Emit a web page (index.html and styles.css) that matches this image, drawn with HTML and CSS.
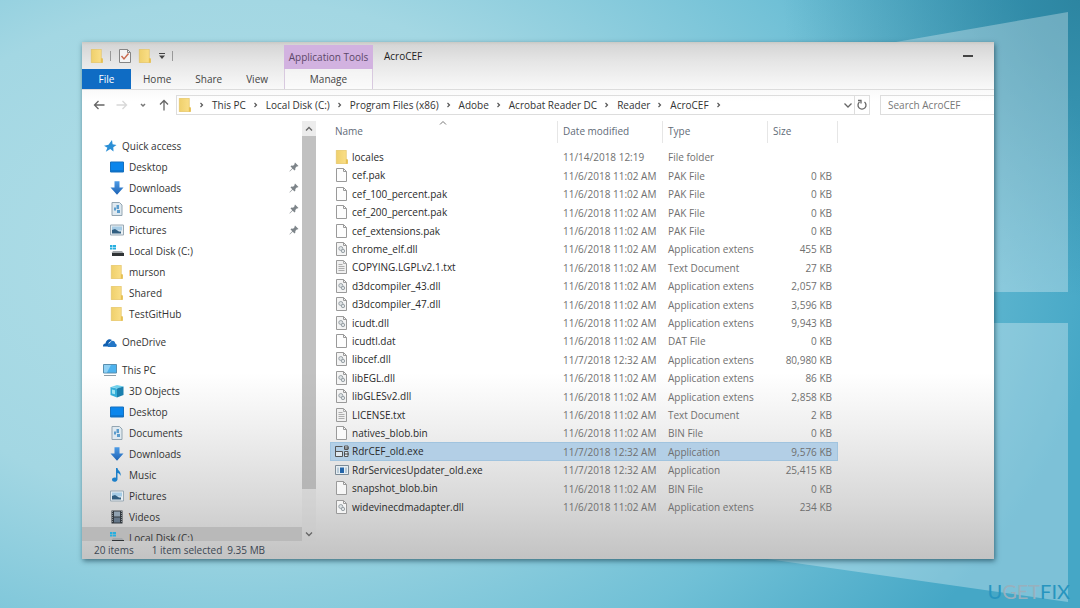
FILE: index.html
```html
<!DOCTYPE html>
<html lang="en">
<head>
<meta charset="utf-8">
<title>AcroCEF</title>
<link rel="stylesheet" href="styles.css">
</head>
<body>
<svg class="defs" aria-hidden="true">
  <defs>
    <linearGradient id="fold" x1="0" x2="1"><stop offset="0" stop-color="#efd06c"/><stop offset="1" stop-color="#fbe08a"/></linearGradient>
    <linearGradient id="down" x1="0" x2="0" y1="0" y2="1"><stop offset="0" stop-color="#4d9be6"/><stop offset="1" stop-color="#1d62b4"/></linearGradient>
  </defs>
  <symbol id="folder" viewBox="0 0 14 14"><path fill="url(#fold)" stroke="#dfbd5c" stroke-width=".6" d="M1.300.3h10v9l1 .8v3.600h-11z"/><path fill="#e6c053" d="M10.800 9.300h2v4.400h-2z"/></symbol>
  <symbol id="file" viewBox="0 0 14 14"><path fill="#fdfdfd" fill-opacity=".8" stroke="#9a9a9a" d="M1.500.5h7l3 3v10h-10z"/><path fill="none" stroke="#9a9a9a" d="M8.500.5v3h3"/></symbol>
  <symbol id="dll" viewBox="0 0 14 14"><path fill="#f4f4f4" stroke="#9a9a9a" d="M1.500.5h7l3 3v10h-10z"/><path fill="none" stroke="#9a9a9a" d="M8.500.5v3h3"/><circle cx="5.800" cy="6.500" r="2" fill="#dfe3e5" stroke="#9aa2a7"/><circle cx="8" cy="9" r="1.700" fill="#dfe3e5" stroke="#9aa2a7"/></symbol>
  <symbol id="txt" viewBox="0 0 14 14"><path fill="#f0f0f0" stroke="#9a9a9a" d="M1.500.5h7l3 3v10h-10z"/><path fill="none" stroke="#adadad" d="M8.500.5v3h3M3.500 4.500h4M3.500 6.500h6M3.500 8.500h6M3.500 10.500h6"/></symbol>
  <symbol id="cef" viewBox="0 0 14 14"><path fill="#dfe9f0" stroke="#555" d="M.5 2.500h7M.5 2.500v10M.5 7.500h7v5h-7M9.500 2h3.500v3.500h-3.500zM9.500 7.500h3.500v5h-3.500z"/><path stroke="#444" d="M9 4h5M9 10h5"/></symbol>
  <symbol id="app" viewBox="0 0 14 14"><path fill="#e6eef3" stroke="#7c8b97" d="M.5 2.500h13v9H.5z"/><path fill="#2465a9" d="M5 4.500h4v5.500H5z"/><path fill="#b9cbd8" d="M2 4.500h2v5.500H2zM10 4.500h2v5.500h-2z"/></symbol>
  <symbol id="star" viewBox="0 0 14 14"><path fill="#2b8fd6" d="M9 1 9.600 5.200 13.500 6 10.300 8.200 10.500 12.500 7.300 10 2.800 12.700 4.400 8.700 1 6.700 5.500 5.700z"/></symbol>
  <symbol id="desktop" viewBox="0 0 14 14"><path fill="#0b86ec" stroke="#1671bf" d="M.5 2h13v10H.5z"/><path fill="#0f66b4" d="M1 10.500h12v1H1z"/></symbol>
  <symbol id="downloads" viewBox="0 0 14 14"><path fill="url(#down)" d="M4.500.3h5v6.200h4L7 13.700.5 6.500h4z"/></symbol>
  <symbol id="documents" viewBox="0 0 14 14"><path fill="#dfe9f0" stroke="#93a5b1" d="M2 .5h7.500L12 3v10.500H2z"/><path fill="#5b9ccc" d="M6.500 3h2.500v4H6.500zM4 5.500h2v3H4zM7 8h3v3H7z"/></symbol>
  <symbol id="pictures" viewBox="0 0 14 14"><path fill="#e9eff3" stroke="#9aa9b4" d="M.5 2h13v10H.5z"/><path fill="#a6cce6" d="M2 3.500h10v4H2z"/><path fill="#315e80" d="m2 7 3-1 4 2.500h2v2H2z"/></symbol>
  <symbol id="disk" viewBox="0 0 14 14"><path fill="#27afe0" d="M0 1h2.500v2H0zM3 1h3v2H3zM0 3.500h2.500v2H0zM3 3.500h3v2H3z"/><path fill="#a4a8ab" d="M3 7h9l1.500 2h-12z"/><path fill="#303436" d="M2 9h12v3H2z"/></symbol>
  <symbol id="cloud" viewBox="0 0 14 14"><path fill="#0f5eb0" d="M0 11.500c0-3 2-3 2.500-3C3 5 6 3 9 5L5.500 8v3.500z"/><path fill="#2376c6" d="M5 12c-1-3 1-4 2-4 1-3 5-3 5.200.5 2 .5 2 3.500 0 3.500z"/></symbol>
  <symbol id="pc" viewBox="0 0 14 14"><path fill="#4db2ee" stroke="#5a8fae" d="M.5 1.500h13v8.500H.5z"/><path fill="#91d1f4" d="M1 2h7L4 9.500H1z"/><path fill="#8e9ca5" d="M1 12h12v1H1z"/></symbol>
  <symbol id="cube" viewBox="0 0 14 14"><path fill="#6fd0ec" d="m1 3 6-2 6.500 1.500-5 2z"/><path fill="#34aed8" d="m.5 3 6.500 1.500v9L.5 11z"/><path fill="#1a7fae" d="m7 4.500 6.500-2V11L7 13.500z"/><path fill="#9ee4f3" d="m2 5.500 3 .8v4L2 9.500z"/></symbol>
  <symbol id="music" viewBox="0 0 14 14"><path fill="#1c7fc9" d="M6 0h1.500c.5 3 4 3.500 3 8-.5-2-1.500-2.600-3-3v6.500C7 14.500 2 14.500 2 11.800 2 9.500 4.500 9 6 9.700z"/></symbol>
  <symbol id="videos" viewBox="0 0 14 14"><path fill="#33393f" d="M1.500.5h11v13h-11z"/><path fill="#91a2b1" d="M4 1.500h6v5H4z"/><path fill="#657789" d="M4 7.500h6v5H4z"/><path stroke="#8d9499" stroke-dasharray="1 1" d="M2.500 1v12M11.500 1v12"/></symbol>
  <symbol id="pin" viewBox="0 0 10 10"><path fill="#7d8489" d="m6 .5 3.500 3.500-1 .5-.5-.3-1.700 1.700.1 1.700-.9.900L3.700 6.700.8 9.500.4 9.200l2.900-2.900L1.500 4.500l.9-.9 1.700.1L5.800 2l-.3-.6z"/></symbol>
  <symbol id="next" viewBox="0 0 6 8"><path fill="none" stroke="#555" stroke-width="1.200" d="m1.500 2 2 2-2 2"/></symbol>
</svg>

<svg class="wall" viewBox="0 0 1080 608" preserveAspectRatio="none" aria-hidden="true">
  <path d="M850 50 1068 12V292H850z"/>
  <path d="M850 323H1068V602L740 555V323z"/>
</svg>

<main class="window">
  <header class="ribbon">
    <div class="quick">
      <svg class="ico"><use href="#folder"/></svg>
      <span class="bar"></span>
      <button class="plain check" aria-label="Properties"><svg class="ico" viewBox="0 0 14 14"><path fill="#f4f4f4" stroke="#858585" d="M1.500.5h8l3 3v10h-11z"/><path fill="none" stroke="#858585" d="M9.500.5v3h3"/><path fill="none" stroke="#c8694e" stroke-width="1.400" d="m3.500 7 2.500 3 4.500-5.500"/></svg></button>
      <button class="plain" aria-label="New folder"><svg class="ico"><use href="#folder"/></svg></button>
      <button class="plain" aria-label="Customize"><svg class="tiny" viewBox="0 0 8 8"><path fill="#444" d="M1 1h6v1H1zM1 3.500h6L4 7z"/></svg></button>
      <span class="bar"></span>
    </div>
    <div class="context">Application Tools</div>
    <div class="title"><h1>AcroCEF</h1><button class="plain" aria-label="Minimize"><svg class="dash" viewBox="0 0 10 2"><path fill="#444" d="M0 0h10v2H0z"/></svg></button></div>
    <nav class="tabs">
      <button class="tab file">File</button><button class="tab">Home</button><button class="tab">Share</button><button class="tab">View</button>
    </nav>
    <button class="tab manage">Manage</button>
  </header>

  <div class="address">
    <div class="moves">
      <button class="plain" aria-label="Back"><svg class="arrow" viewBox="0 0 12 12"><path d="M11.500 6H1.500M5.500 2l-4 4 4 4"/></svg></button>
      <button class="plain faint" aria-label="Forward"><svg class="arrow" viewBox="0 0 12 12"><path d="M.5 6h10M6.500 2l4 4-4 4"/></svg></button>
      <button class="plain" aria-label="Recent"><svg class="tiny" viewBox="0 0 8 8"><path fill="none" stroke="#777" stroke-width="1.500" d="m2 3 2 2 2-2"/></svg></button>
      <button class="plain" aria-label="Up"><svg class="arrow" viewBox="0 0 12 12"><path d="M6 11.500v-10M2 5.500l4-4 4 4"/></svg></button>
    </div>
    <nav class="path">
      <svg class="ico"><use href="#folder"/></svg>
      <svg class="sep"><use href="#next"/></svg><a href="#">This PC</a>
      <svg class="sep"><use href="#next"/></svg><a href="#">Local Disk (C:)</a>
      <svg class="sep"><use href="#next"/></svg><a href="#">Program Files (x86)</a>
      <svg class="sep"><use href="#next"/></svg><a href="#">Adobe</a>
      <svg class="sep"><use href="#next"/></svg><a href="#">Acrobat Reader DC</a>
      <svg class="sep"><use href="#next"/></svg><a href="#">Reader</a>
      <svg class="sep"><use href="#next"/></svg><a href="#">AcroCEF</a>
      <svg class="sep"><use href="#next"/></svg>
      <button class="plain drop" aria-label="Previous locations"><svg class="arrow" viewBox="0 0 12 12"><path d="m2.500 4.500 3.500 3.500 3.500-3.500"/></svg></button>
      <button class="plain reload" aria-label="Refresh"><svg class="arrow" viewBox="0 0 12 12"><path d="M3.500 3A4 4 0 1 0 8.500 3M2 1.500h3v3"/></svg></button>
    </nav>
    <input class="search" type="search" aria-label="Search AcroCEF" placeholder="Search AcroCEF">
  </div>

  <div class="panes">
    <nav class="tree">
      <a class="top" href="#"><svg class="ico"><use href="#star"/></svg>Quick access</a>
      <a href="#"><svg class="ico"><use href="#desktop"/></svg>Desktop<svg class="pin"><use href="#pin"/></svg></a>
      <a href="#"><svg class="ico"><use href="#downloads"/></svg>Downloads<svg class="pin"><use href="#pin"/></svg></a>
      <a href="#"><svg class="ico"><use href="#documents"/></svg>Documents<svg class="pin"><use href="#pin"/></svg></a>
      <a href="#"><svg class="ico"><use href="#pictures"/></svg>Pictures<svg class="pin"><use href="#pin"/></svg></a>
      <a href="#"><svg class="ico"><use href="#disk"/></svg>Local Disk (C:)</a>
      <a href="#"><svg class="ico"><use href="#folder"/></svg>murson</a>
      <a href="#"><svg class="ico"><use href="#folder"/></svg>Shared</a>
      <a href="#"><svg class="ico"><use href="#folder"/></svg>TestGitHub</a>
      <a class="top group" href="#"><svg class="ico"><use href="#cloud"/></svg>OneDrive</a>
      <a class="top group" href="#"><svg class="ico"><use href="#pc"/></svg>This PC</a>
      <a href="#"><svg class="ico"><use href="#cube"/></svg>3D Objects</a>
      <a href="#"><svg class="ico"><use href="#desktop"/></svg>Desktop</a>
      <a href="#"><svg class="ico"><use href="#documents"/></svg>Documents</a>
      <a href="#"><svg class="ico"><use href="#downloads"/></svg>Downloads</a>
      <a href="#"><svg class="ico"><use href="#music"/></svg>Music</a>
      <a href="#"><svg class="ico"><use href="#pictures"/></svg>Pictures</a>
      <a href="#"><svg class="ico"><use href="#videos"/></svg>Videos</a>
      <a class="current" href="#"><svg class="ico"><use href="#disk"/></svg>Local Disk (C:)</a>
    </nav>
    <div class="scroll">
      <button class="plain" aria-label="Scroll up"><svg class="arrow" viewBox="0 0 12 12"><path d="m3 7.500 3-3 3 3"/></svg></button>
      <div class="thumb"></div>
      <button class="plain" aria-label="Scroll down"><svg class="arrow" viewBox="0 0 12 12"><path d="m3 4.500 3 3 3-3"/></svg></button>
    </div>
    <div class="list">
      <table>
        <thead><tr><th class="name">Name<svg class="sort" viewBox="0 0 8 4"><path fill="none" stroke="#777" d="m1 3.500 3-3 3 3"/></svg></th><th class="date">Date modified</th><th class="type">Type</th><th class="size">Size</th></tr></thead>
        <tbody>
          <tr><td><svg class="ico"><use href="#folder"/></svg>locales</td><td>11/14/2018 12:19</td><td>File folder</td><td></td></tr>
          <tr><td><svg class="ico"><use href="#file"/></svg>cef.pak</td><td>11/6/2018 11:02 AM</td><td>PAK File</td><td>0 KB</td></tr>
          <tr><td><svg class="ico"><use href="#file"/></svg>cef_100_percent.pak</td><td>11/6/2018 11:02 AM</td><td>PAK File</td><td>0 KB</td></tr>
          <tr><td><svg class="ico"><use href="#file"/></svg>cef_200_percent.pak</td><td>11/6/2018 11:02 AM</td><td>PAK File</td><td>0 KB</td></tr>
          <tr><td><svg class="ico"><use href="#file"/></svg>cef_extensions.pak</td><td>11/6/2018 11:02 AM</td><td>PAK File</td><td>0 KB</td></tr>
          <tr><td><svg class="ico"><use href="#dll"/></svg>chrome_elf.dll</td><td>11/6/2018 11:02 AM</td><td>Application extens</td><td>455 KB</td></tr>
          <tr><td><svg class="ico"><use href="#txt"/></svg>COPYING.LGPLv2.1.txt</td><td>11/6/2018 11:02 AM</td><td>Text Document</td><td>27 KB</td></tr>
          <tr><td><svg class="ico"><use href="#dll"/></svg>d3dcompiler_43.dll</td><td>11/6/2018 11:02 AM</td><td>Application extens</td><td>2,057 KB</td></tr>
          <tr><td><svg class="ico"><use href="#dll"/></svg>d3dcompiler_47.dll</td><td>11/6/2018 11:02 AM</td><td>Application extens</td><td>3,596 KB</td></tr>
          <tr><td><svg class="ico"><use href="#dll"/></svg>icudt.dll</td><td>11/6/2018 11:02 AM</td><td>Application extens</td><td>9,943 KB</td></tr>
          <tr><td><svg class="ico"><use href="#file"/></svg>icudtl.dat</td><td>11/6/2018 11:02 AM</td><td>DAT File</td><td>0 KB</td></tr>
          <tr><td><svg class="ico"><use href="#dll"/></svg>libcef.dll</td><td>11/7/2018 12:32 AM</td><td>Application extens</td><td>80,980 KB</td></tr>
          <tr><td><svg class="ico"><use href="#dll"/></svg>libEGL.dll</td><td>11/6/2018 11:02 AM</td><td>Application extens</td><td>86 KB</td></tr>
          <tr><td><svg class="ico"><use href="#dll"/></svg>libGLESv2.dll</td><td>11/6/2018 11:02 AM</td><td>Application extens</td><td>2,858 KB</td></tr>
          <tr><td><svg class="ico"><use href="#txt"/></svg>LICENSE.txt</td><td>11/6/2018 11:02 AM</td><td>Text Document</td><td>2 KB</td></tr>
          <tr><td><svg class="ico"><use href="#file"/></svg>natives_blob.bin</td><td>11/6/2018 11:02 AM</td><td>BIN File</td><td>0 KB</td></tr>
          <tr class="selected"><td><svg class="ico"><use href="#cef"/></svg>RdrCEF_old.exe</td><td>11/7/2018 12:32 AM</td><td>Application</td><td>9,576 KB</td></tr>
          <tr><td><svg class="ico"><use href="#app"/></svg>RdrServicesUpdater_old.exe</td><td>11/7/2018 12:32 AM</td><td>Application</td><td>25,415 KB</td></tr>
          <tr><td><svg class="ico"><use href="#file"/></svg>snapshot_blob.bin</td><td>11/6/2018 11:02 AM</td><td>BIN File</td><td>0 KB</td></tr>
          <tr><td><svg class="ico"><use href="#dll"/></svg>widevinecdmadapter.dll</td><td>11/6/2018 11:02 AM</td><td>Application extens</td><td>234 KB</td></tr>
        </tbody>
      </table>
    </div>
  </div>

  <footer class="status"><span class="count">20 items</span><span>1 item selected</span><span>9.35 MB</span></footer>
</main>
<div class="brand">U<span>GET</span>FIX</div>
</body>
</html>
```

FILE: styles.css
```css
* { box-sizing: border-box; }
body {
  margin: 0;
  height: 100vh;
  padding: 42px 86px 49px 82px;
  display: flex;
  font: 10px/18px "Open Sans", "Noto Sans", sans-serif;
  color: #333;
  background:
    radial-gradient(circle at 100% 0, rgba(20, 100, 125, .5), transparent 24%),
    radial-gradient(ellipse 80% 100% at 22% 42%, #b2dfe8 0%, #a3d7e3 42%, #70c0d6 75%, #45a7c6 100%);
}
svg { display: block; flex: none; }
.defs { position: absolute; width: 0; height: 0; }
.wall { position: absolute; inset: 0; width: 100%; height: 100%; fill: #fff; fill-opacity: .3; }
.ico { width: 14px; height: 14px; }
.tiny { width: 8px; height: 8px; }
.arrow { width: 12px; height: 12px; fill: none; stroke: #666; stroke-width: 1.3; }
.plain { border: 0; padding: 0; background: none; display: flex; align-items: center; justify-content: center; }
a { color: inherit; text-decoration: none; }

.window {
  position: relative;
  flex: 1;
  min-width: 0;
  display: flex;
  flex-direction: column;
  overflow: hidden;
  background: linear-gradient(#c9c9c5 0, #d6d6d6 3px, #e6e6e6 20px, #f8f8f8 46px, #fff 60px, #fff 64%, #efefef 75%, #dadada 88%, #c3c3c3 100%);
  box-shadow: 1px 2px 5px rgba(20, 60, 75, .65);
}

.ribbon {
  display: grid;
  grid-template-columns: 202px 89px 1fr;
  grid-template-rows: 27px 20px;
  border-bottom: 1px solid #dcdcdc;
}
.quick { display: flex; align-items: center; gap: 6px; padding-left: 8px; }
.check { margin-left: 1px; }
.bar { width: 1px; height: 10px; background: #999; }
.context { margin-top: 3px; background: #d2b2e0; color: #5c4768; text-align: center; line-height: 24px; white-space: nowrap; }
.title { display: flex; align-items: center; justify-content: space-between; padding: 0 21px 0 11px; }
h1 { margin: 0; font: inherit; color: #222; }
.dash { width: 10px; height: 2px; }
.tabs { display: flex; }
.tab { border: 0; padding: 0 12px; background: none; font: inherit; color: #444; }
.file { width: 49px; background: #0f6cc4; color: #fff; }
.manage { border: solid #d8c9df; border-width: 0 1px; background: rgba(255, 255, 255, .4); }

.address { display: flex; align-items: center; height: 29px; margin-bottom: 2px; }
.moves { width: 94px; display: flex; align-items: center; justify-content: space-between; padding: 0 6px 0 11px; }
.faint { opacity: .25; }
.path { flex: 1; display: flex; align-items: center; gap: 7px; height: 20px; border: 1px solid #ddd; padding-left: 1px; white-space: nowrap; line-height: 16px; }
.sep { width: 6px; height: 8px; }
.drop { margin-left: auto; }
.reload { align-self: stretch; width: 15px; margin-left: -7px; border-left: 1px solid #ddd; }
.search { width: 114px; height: 20px; margin-left: 10px; border: solid #ddd; border-width: 1px 0 1px 1px; border-radius: 0; padding: 0 7px; background: none; font: inherit; line-height: 16px; appearance: none; }
.search::placeholder { color: #777; opacity: 1; }

.panes { flex: 1; min-height: 0; display: flex; }
.tree { width: 220px; padding-top: 14px; overflow: hidden; line-height: 20px; }
.tree a { display: flex; align-items: center; gap: 5px; height: 21px; padding: 0 3px 0 28px; }
.tree .top { padding-left: 21px; }
.tree .group { margin-top: 7px; }
.tree .current { background: #b9b9b9; }
.pin { width: 10px; height: 10px; margin-left: auto; }
.scroll { width: 14px; display: flex; flex-direction: column; background: rgba(200, 200, 200, .35); }
.scroll .plain { height: 15px; }
.thumb { height: 84%; margin-bottom: auto; background: rgba(150, 150, 150, .5); }

.list { padding-left: 14px; }
table { width: 508px; border-collapse: collapse; table-layout: fixed; }
th, td { padding: 0 0 0 5px; font-weight: 400; text-align: left; line-height: 18px; white-space: nowrap; color: #707070; }
th { position: relative; height: 27px; padding-bottom: 8px; color: #5f6b78; background: linear-gradient(#e6e6e6, #e6e6e6) right top / 1px 22px no-repeat; }
.name { width: 228px; }
.date, .type { width: 105px; }
.sort { position: absolute; left: 109px; top: 0; width: 8px; height: 4px; }
tbody tr { height: 18px; }
tbody tr:nth-child(5n+2), tbody tr:nth-child(5n+4) { height: 19px; }
td:first-child { display: flex; align-items: center; gap: 3px; color: #2a2a2a; }
td:last-child { padding-right: 6px; text-align: right; }
.selected { background: #b3cfe6; outline: 1px solid #a1c4df; outline-offset: -1px; }

.status { display: flex; height: 18px; padding-left: 12px; gap: 5px; color: #3c4652; }
.count { margin-right: 13px; }

.brand { position: absolute; right: 10px; bottom: 5px; font: 20px/24px Lato, sans-serif; color: #2795bf; }
.brand span { color: #98b0bd; }
```
